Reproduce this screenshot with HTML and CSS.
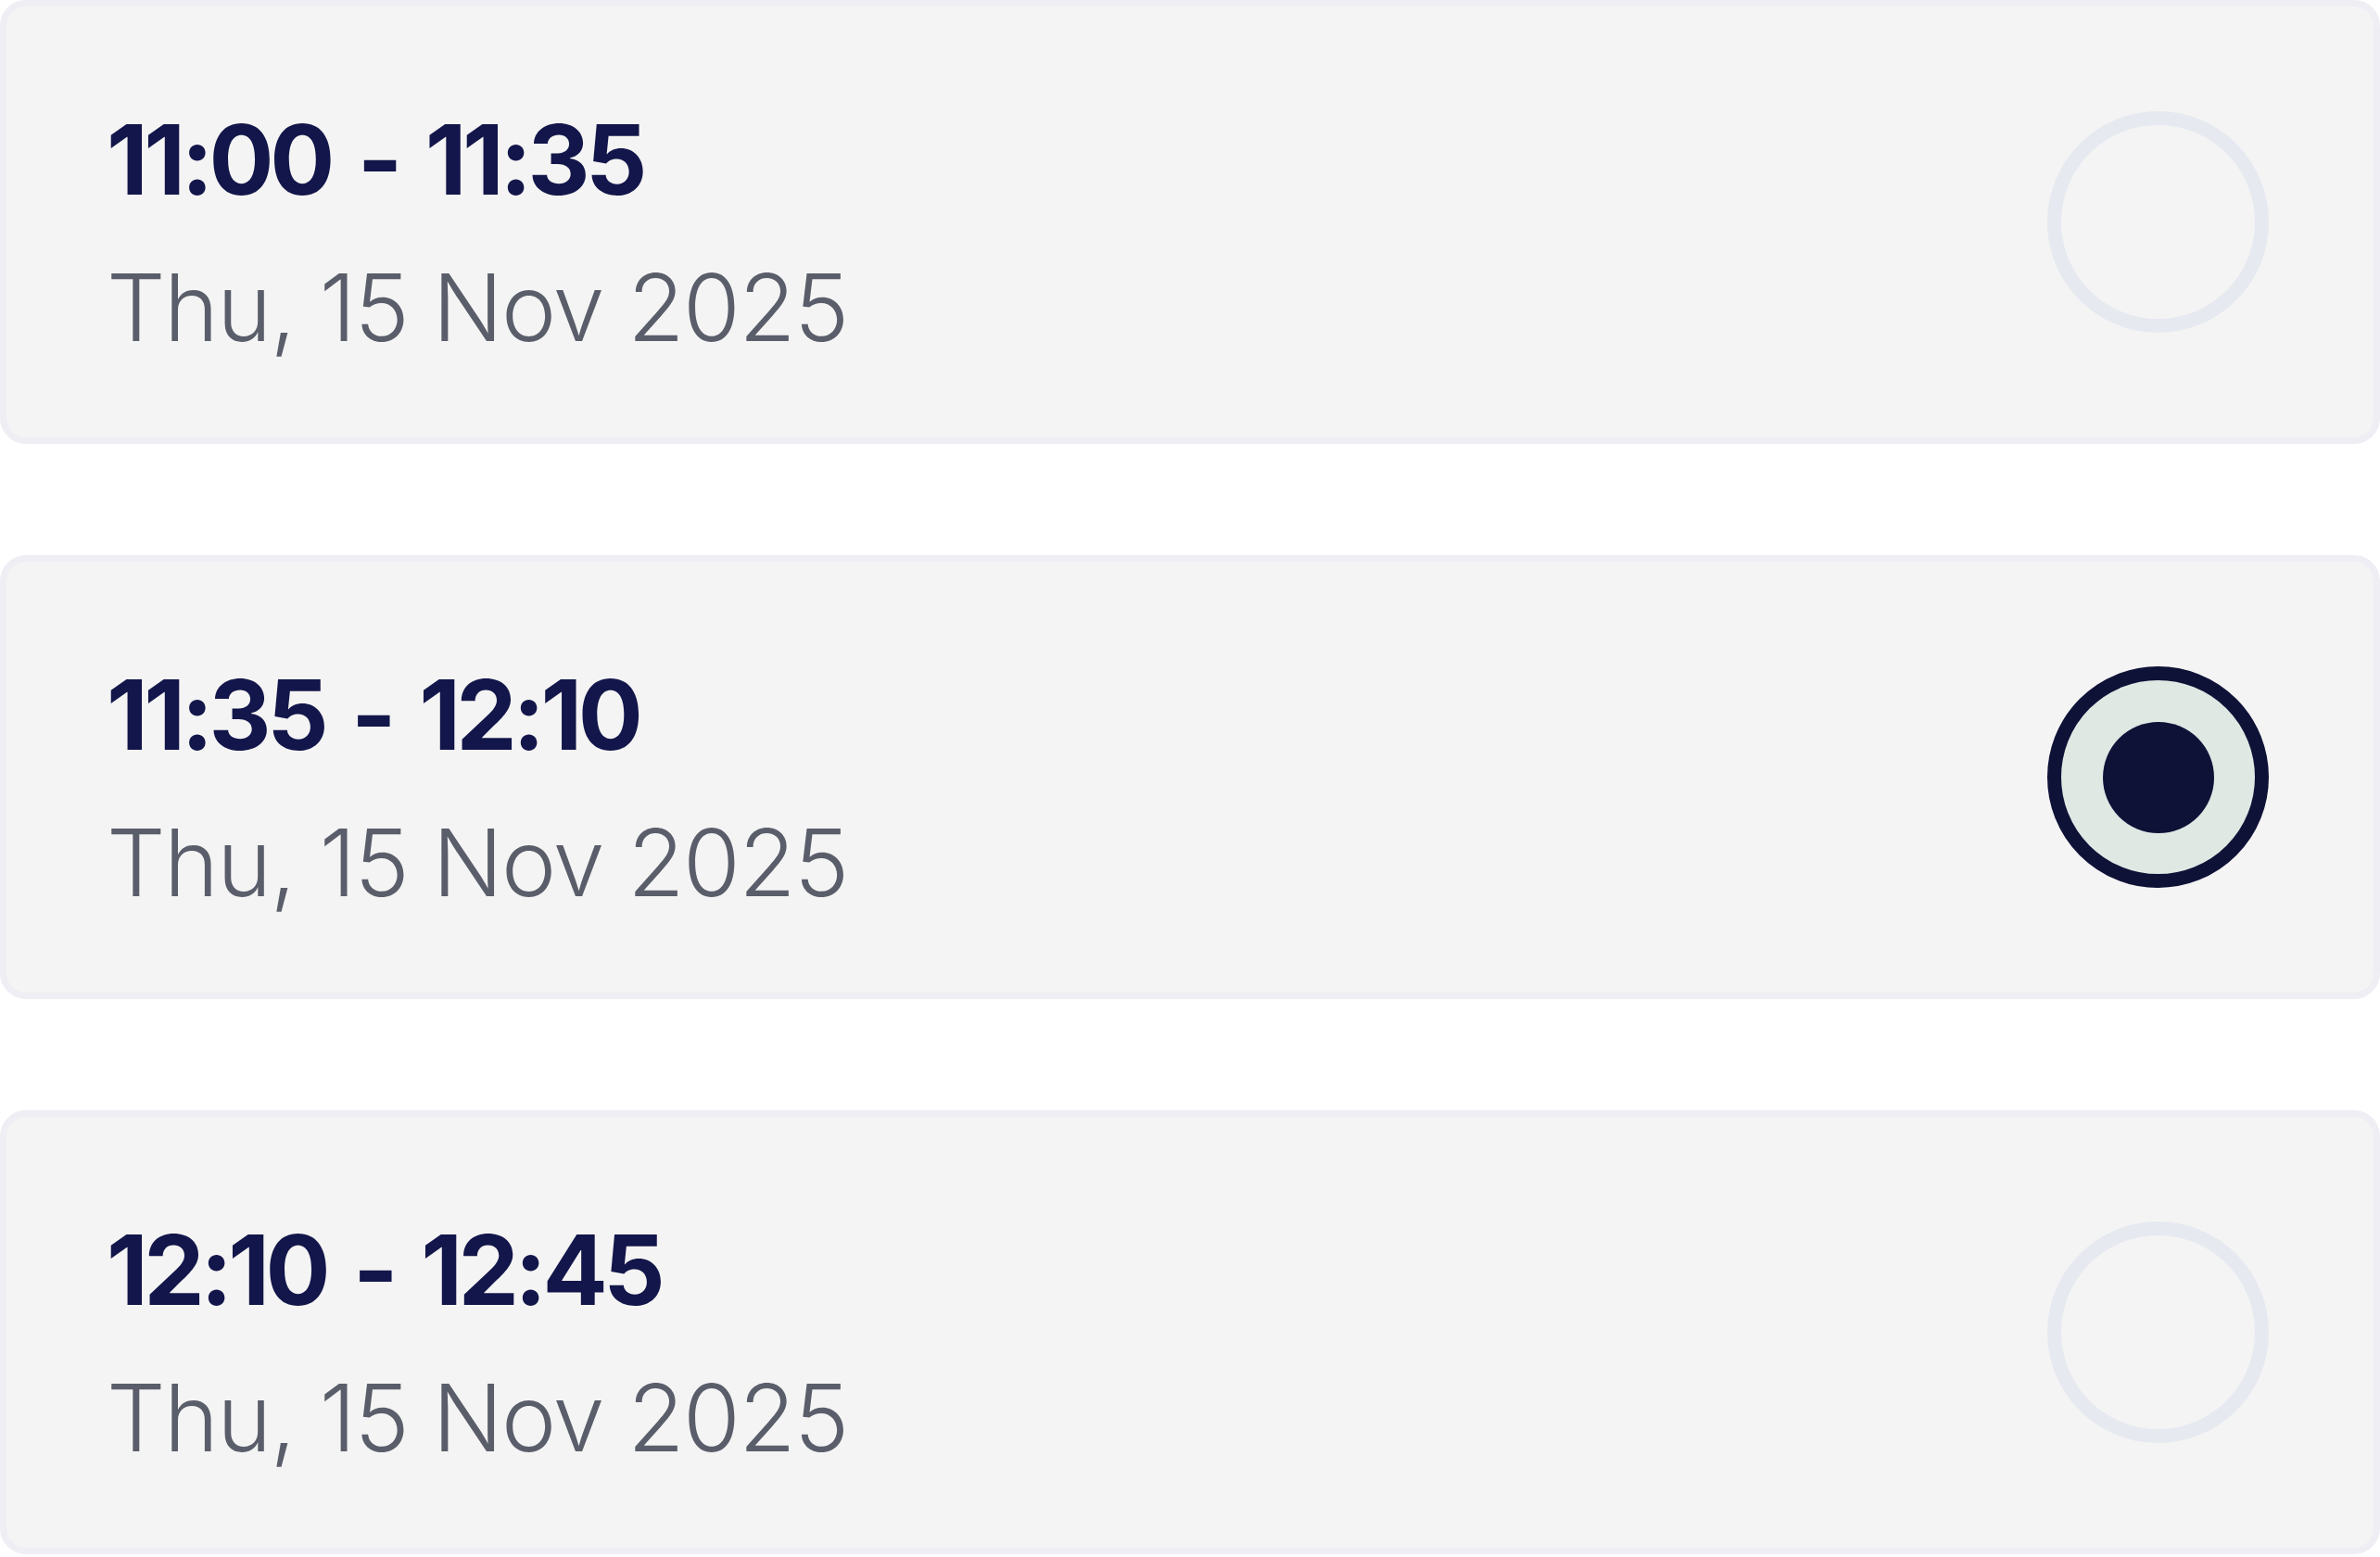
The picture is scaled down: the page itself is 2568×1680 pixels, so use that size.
FILE: index.html
```html
<!DOCTYPE html>
<html lang="en">
<head>
<meta charset="utf-8">
<title>Time slots</title>
<link rel="stylesheet" href="styles.css">
</head>
<body>
<div class="slots">
  <div class="slot">
    <div class="slot-text">
      <div class="slot-time">11:00 - 11:35</div>
      <div class="slot-date">Thu, 15 Nov 2025</div>
    </div>
    <span class="radio"></span>
  </div>
  <div class="slot">
    <div class="slot-text">
      <div class="slot-time">11:35 - 12:10</div>
      <div class="slot-date">Thu, 15 Nov 2025</div>
    </div>
    <span class="radio radio-checked"><span class="radio-dot"></span></span>
  </div>
  <div class="slot">
    <div class="slot-text">
      <div class="slot-time">12:10 - 12:45</div>
      <div class="slot-date">Thu, 15 Nov 2025</div>
    </div>
    <span class="radio"></span>
  </div>
</div>
</body>
</html>
```

FILE: styles.css
```css
html, body {
  margin: 0;
  padding: 0;
  background: #ffffff;
}

body {
  font-family: "Inter", "Noto Sans", sans-serif;
}

.slots {
  display: flex;
  flex-direction: column;
  gap: 120px;
}

.slot {
  box-sizing: border-box;
  height: 479px;
  display: flex;
  align-items: center;
  justify-content: space-between;
  padding: 0 113px 0 108px;
  background: #f4f4f4;
  border: 7px solid #eeeef4;
  border-radius: 28px;
}

.slot-text {
  display: flex;
  flex-direction: column;
  gap: 58px;
  padding-top: 22px;
}

.slot-time {
  font-size: 104px;
  line-height: 104px;
  font-weight: 700;
  letter-spacing: -4.6px;
  word-spacing: 9px;
  color: #13164a;
}

.slot-date {
  font-size: 100px;
  line-height: 100px;
  font-weight: 300;
  letter-spacing: -1.6px;
  color: #5a5e6b;
}

.radio {
  box-sizing: border-box;
  width: 239px;
  height: 239px;
  border-radius: 50%;
  border: 15px solid #e6e9f0;
  display: flex;
  align-items: center;
  justify-content: center;
  flex: none;
}

.radio-checked {
  border-color: #0f1237;
  background: #e0e8e4;
}

.radio-dot {
  width: 120px;
  height: 120px;
  border-radius: 50%;
  background: #0f1237;
}
```
